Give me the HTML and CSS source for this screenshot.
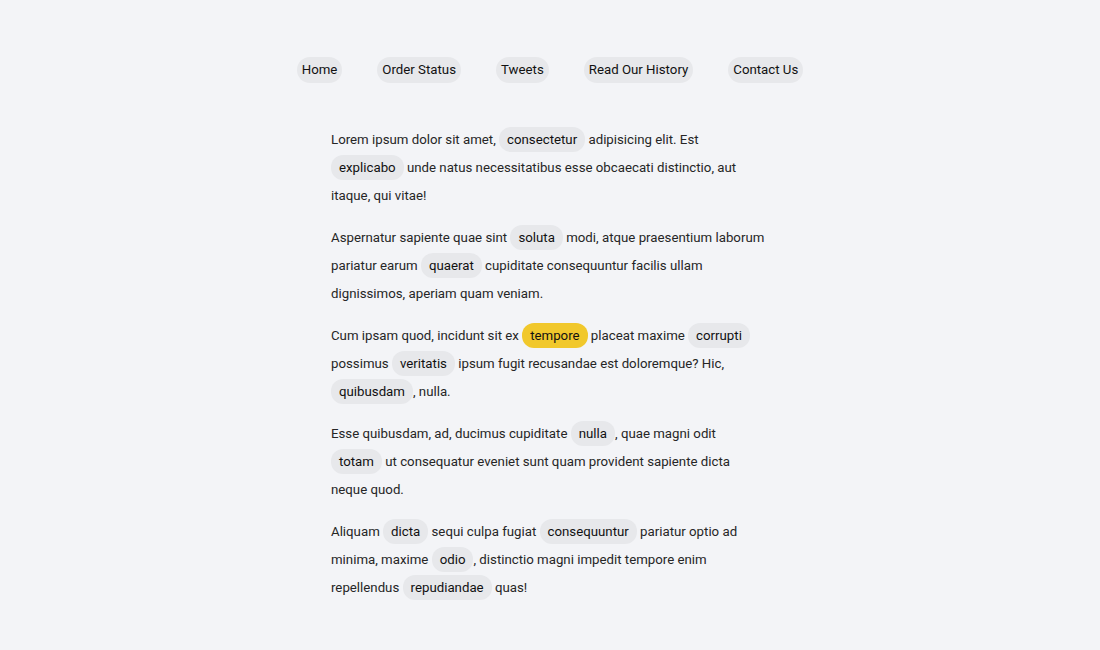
FILE: index.html
```html
<!DOCTYPE html>
<html lang="en">
<head>
<meta charset="utf-8">
<title>Highlights</title>
<link rel="stylesheet" href="styles.css">
</head>
<body>
<nav class="nav">
  <a class="nav-link" href="#">Home</a>
  <a class="nav-link" href="#">Order Status</a>
  <a class="nav-link" href="#">Tweets</a>
  <a class="nav-link" href="#">Read Our History</a>
  <a class="nav-link" href="#">Contact Us</a>
</nav>
<main class="content">
  <p>Lorem ipsum dolor sit amet, <a class="tag" href="#">consectetur</a> adipisicing elit. Est <a class="tag" href="#">explicabo</a> unde natus necessitatibus esse obcaecati distinctio, aut itaque, qui vitae!</p>
  <p>Aspernatur sapiente quae sint <a class="tag" href="#">soluta</a> modi, atque praesentium laborum pariatur earum <a class="tag" href="#">quaerat</a> cupiditate consequuntur facilis ullam dignissimos, aperiam quam veniam.</p>
  <p>Cum ipsam quod, incidunt sit ex <a class="tag tag-active" href="#">tempore</a> placeat maxime <a class="tag" href="#">corrupti</a> possimus <a class="tag" href="#">veritatis</a> ipsum fugit recusandae est doloremque? Hic, <a class="tag" href="#">quibusdam</a>, nulla.</p>
  <p>Esse quibusdam, ad, ducimus cupiditate <a class="tag" href="#">nulla</a>, quae magni odit <a class="tag" href="#">totam</a> ut consequatur eveniet sunt quam provident sapiente dicta neque quod.</p>
  <p>Aliquam <a class="tag" href="#">dicta</a> sequi culpa fugiat <a class="tag" href="#">consequuntur</a> pariatur optio ad minima, maxime <a class="tag" href="#">odio</a>, distinctio magni impedit tempore enim repellendus <a class="tag" href="#">repudiandae</a> quas!</p>
</main>
</body>
</html>
```
FILE: styles.css
```css
html, body {
  margin: 0;
  background: #f3f4f7;
}
body {
  font-family: Roboto, "Noto Sans", sans-serif;
  font-size: 13.25px;
  color: #262626;
  padding-top: 57px;
}
.nav {
  display: flex;
  justify-content: center;
  gap: 35px;
}
.nav-link {
  display: block;
  padding: 5px 5px;
  line-height: 16px;
  border-radius: 13px;
  background: #e7e8eb;
  color: #111;
  text-decoration: none;
}
.content {
  width: 438px;
  margin: 43px auto 0;
}
.content p {
  margin: 0 0 14px;
  line-height: 28px;
}
.tag {
  display: inline-block;
  padding: 4px 8px;
  line-height: 17px;
  border-radius: 12px;
  background: #e7e8eb;
  color: #111;
  text-decoration: none;
}
.tag-active {
  background: #f1c82c;
}
```
